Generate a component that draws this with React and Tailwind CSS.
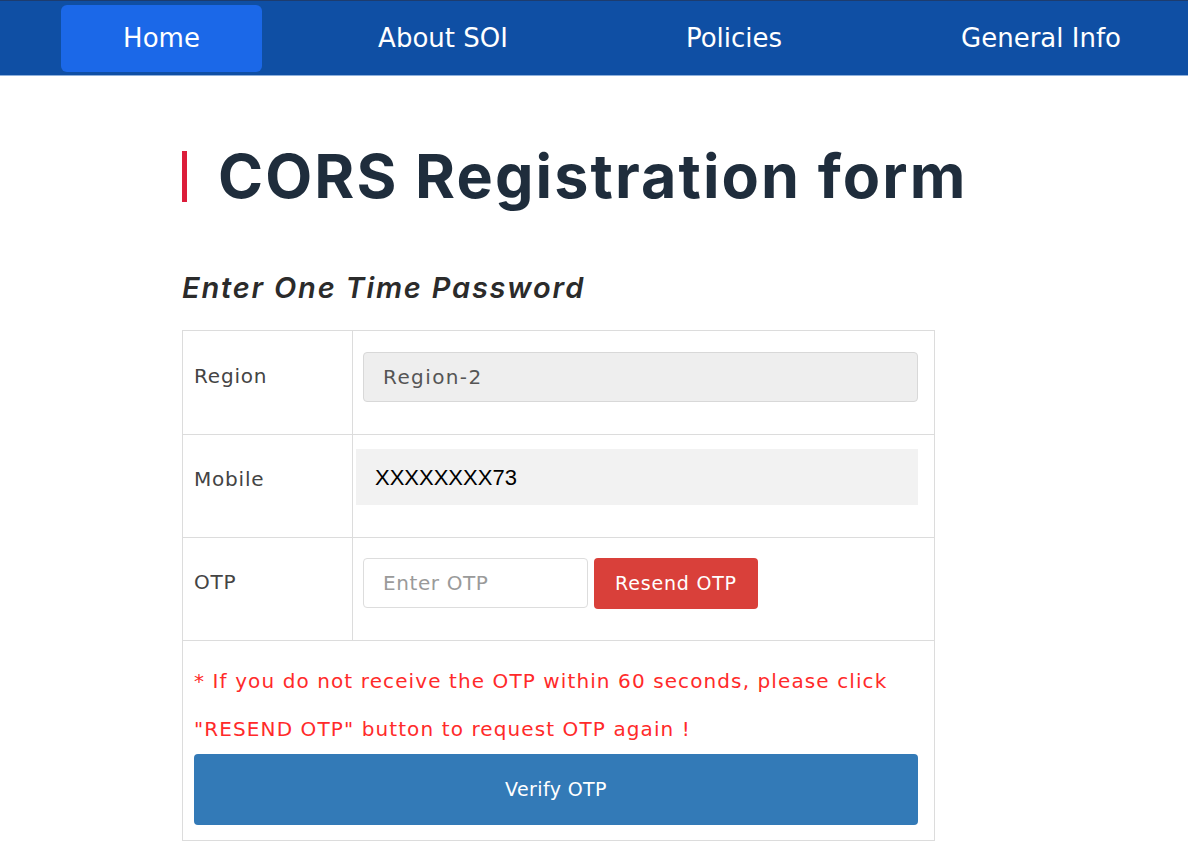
import React from 'react'

const navItems = [
  { label: 'Home', w: 'w-[201px]', active: true },
  { label: 'About SOI', w: 'w-[252px]' },
  { label: 'Policies', w: 'w-[220px]' },
  { label: 'General Info', w: 'w-[284px]' }
]

export default function App() {
  return (
    <div className="min-h-[844px] bg-white font-['DejaVu_Sans',sans-serif]">
      {/* barra de navegación */}
      <nav className="h-[76px] bg-[#0f4fa4] border-t border-t-[#1d3c6e] border-b border-b-[#8eb0dc] flex items-center gap-[55px] pl-[61px]">
        {navItems.map(item => (
          <a
            key={item.label}
            className={`${item.w} h-[67px] flex items-center justify-center rounded-[6px] text-white text-[26px] ${item.active ? 'bg-[#1b68e8]' : ''}`}
          >
            {item.label}
          </a>
        ))}
      </nav>

      <main className="pl-[182px] pt-[72px]">
        <div className="flex items-center h-[56px]">
          <span className="w-[5px] h-[51px] bg-[#dc1d3a] mr-[31px]" />
          <h1 className="font-['Inter',sans-serif] font-bold text-[61px] leading-none text-[#1f2d3c] tracking-[2.1px]">
            CORS Registration form
          </h1>
        </div>

        <h2 className="mt-[66px] font-['Inter',sans-serif] italic font-semibold text-[29px] leading-[36px] text-[#2b2b2b] tracking-[1.8px]">
          Enter One Time Password
        </h2>

        <table className="mt-[24px] w-[753px] border-collapse border border-[#dcdcdc] text-[20px] text-[#444] tracking-[0.8px]">
          <tbody>
            <tr className="h-[104px]">
              <td className="w-[170px] border border-[#dcdcdc] pl-[11px] pb-[14px] align-middle">Region</td>
              <td className="border border-[#dcdcdc] pl-[10px] pr-[16px] pb-[12px] align-middle">
                <div className="h-[50px] rounded-[4px] bg-[#eeeeee] border border-[#d8d8d8] flex items-center pl-[19px] text-[#555] tracking-[1.4px]">
                  Region-2
                </div>
              </td>
            </tr>
            <tr className="h-[103px]">
              <td className="border border-[#dcdcdc] pl-[11px] pb-[14px] align-middle">Mobile</td>
              <td className="border border-[#dcdcdc] pl-[3px] pr-[16px] pb-[18px] align-middle">
                <div className="h-[56px] bg-[#f2f2f2] flex items-center pl-[19px] font-['Liberation_Sans',Arial,sans-serif] text-[22px] text-black tracking-normal">
                  XXXXXXXX73
                </div>
              </td>
            </tr>
            <tr className="h-[103px]">
              <td className="border border-[#dcdcdc] pl-[11px] pb-[14px] align-middle">OTP</td>
              <td className="border border-[#dcdcdc] pl-[10px] pb-[12px] align-middle">
                <div className="flex items-center gap-[6px]">
                  <input
                    placeholder="Enter OTP"
                    className="w-[225px] h-[50px] rounded-[4px] border border-[#dddddd] bg-white pl-[19px] text-[20px] tracking-[0.6px] placeholder:text-[#9a9a9a] outline-none"
                  />
                  <button className="w-[164px] h-[51px] rounded-[4px] bg-[#d9403a] text-white text-[19px] tracking-[0.8px]">
                    Resend OTP
                  </button>
                </div>
              </td>
            </tr>
            <tr>
              <td colSpan={2} className="border border-[#dcdcdc] pl-[11px] pr-[16px] pt-[16px] pb-[15px]">
                <p className="text-[#ff2a2a] text-[20px] leading-[48px] tracking-[1.1px]">
                  * If you do not receive the OTP within 60 seconds, please click
                  <br />
                  "RESEND OTP" button to request OTP again !
                </p>
                <button className="mt-[1px] w-full h-[71px] rounded-[4px] bg-[#337ab7] text-white text-[19px] tracking-[0.4px]">
                  Verify OTP
                </button>
              </td>
            </tr>
          </tbody>
        </table>
      </main>
    </div>
  )
}
